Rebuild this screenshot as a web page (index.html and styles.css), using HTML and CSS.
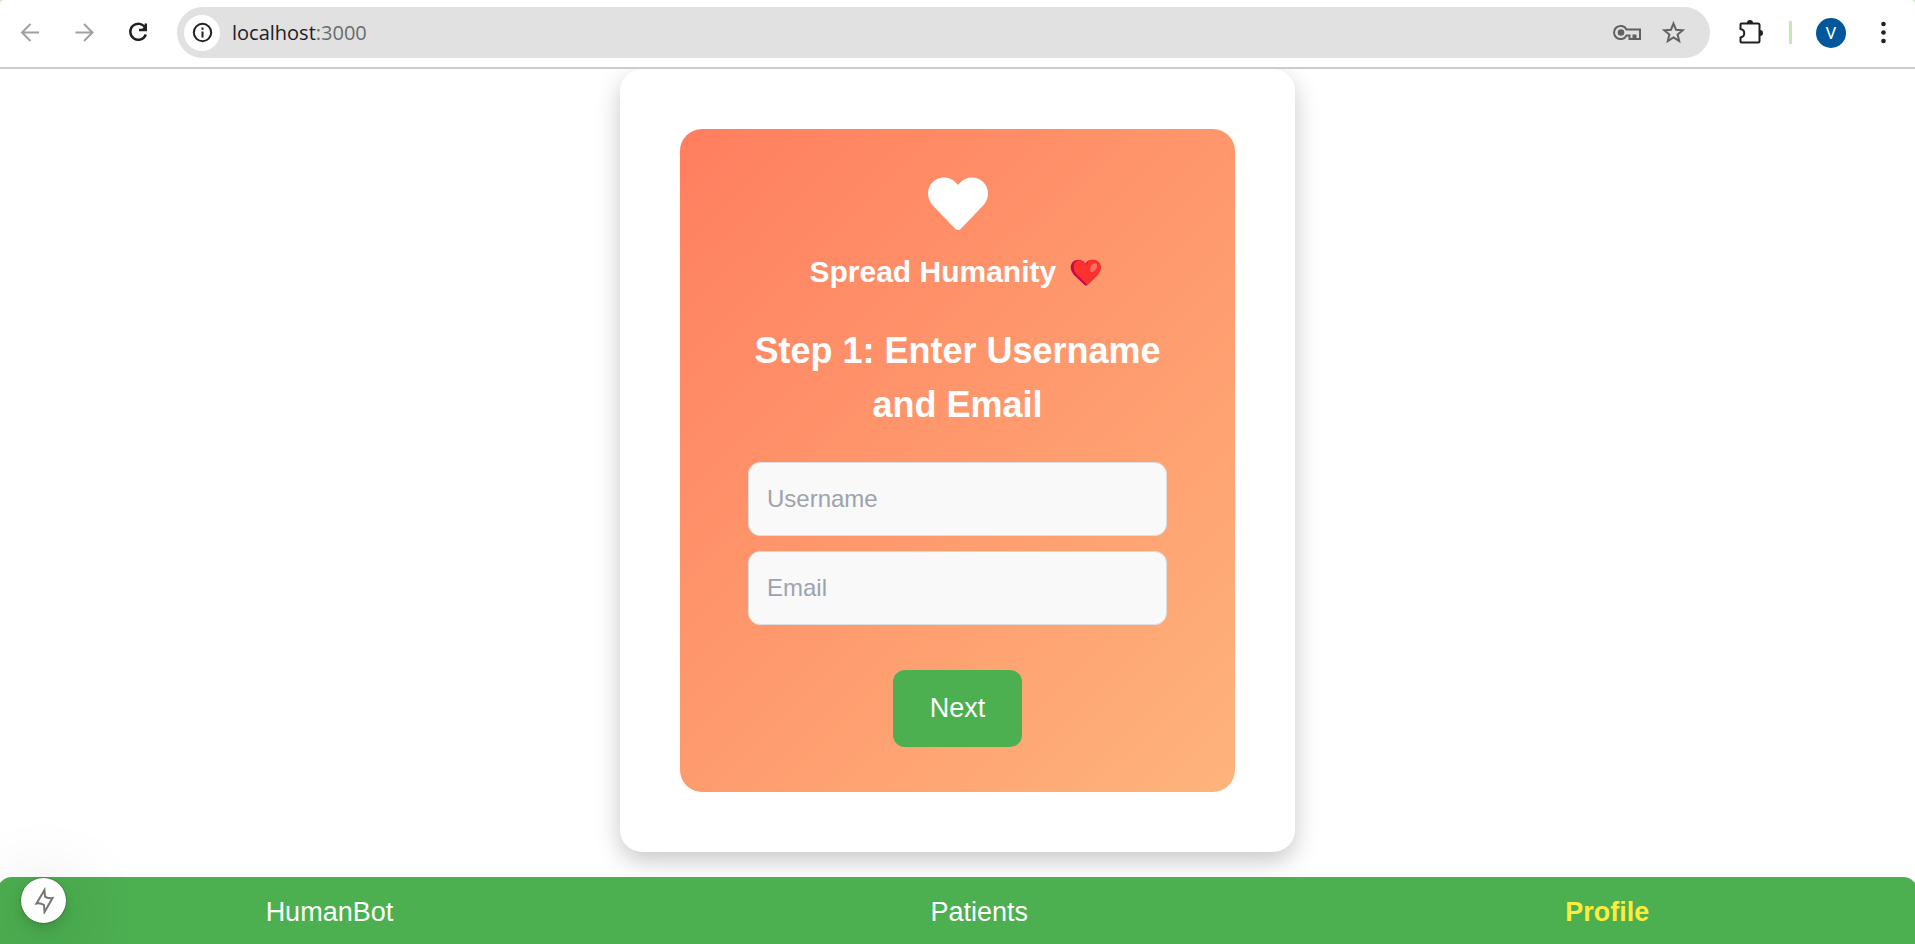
FILE: index.html
```html
<!DOCTYPE html>
<html lang="en">
<head>
<meta charset="utf-8">
<title>Profile</title>
<link rel="stylesheet" href="styles.css">
</head>
<body>
<div class="window">
  <div class="frame">
  <header class="toolbar">
    <div class="history">
      <button class="icon-button muted" aria-label="Back"><svg class="icon" viewBox="0 0 27 27"><path d="M22 13.500H5.500M13.500 5l-8.500 8.500 8.500 8.500"/></svg></button>
      <button class="icon-button muted" aria-label="Forward"><svg class="icon" viewBox="0 0 27 27"><path d="M4.500 13.500H21M13 5l8.500 8.500-8.500 8.500"/></svg></button>
      <button class="icon-button" aria-label="Reload"><svg class="icon bold" viewBox="0 0 27 27"><path d="M20.200 8.700A8 8 0 1 0 20.800 15.500"/><path d="M20.800 4.500V11H14"/><path d="M16.500 10.500H21V6z" fill="currentColor" stroke="none"/></svg></button>
    </div>
    <div class="address">
      <button class="site-info" aria-label="Site information"><svg class="icon" viewBox="0 0 27 27"><circle cx="13.500" cy="13.500" r="8.700"/><path d="M13.500 12.500v6M13.500 8.500v2.200"/></svg></button>
      <label class="url"><span class="host">localhost</span><span class="port">:3000</span></label>
      <button class="icon-button grey" aria-label="Passwords"><svg class="icon wide" viewBox="0 0 30 27"><path d="M14.500 10.500A6.600 6.600 0 1 0 14.500 16.500H17.500v3.500h4v-3.500h2v3.500H28v-9.500z"/><circle cx="9" cy="13.500" r="3.300" fill="currentColor" stroke="none"/></svg></button>
      <button class="icon-button grey" aria-label="Bookmark"><svg class="icon" viewBox="0 0 27 27"><path d="M13.500 4.500l2.500 6.200 6.700.5-5.100 4.300 1.600 6.500-5.700-3.500-5.700 3.500 1.600-6.500-5.100-4.300 6.700-.5z"/></svg></button>
    </div>
    <div class="actions">
      <button class="icon-button" aria-label="Extensions"><svg class="icon" viewBox="0 0 27 27"><path d="M2.500 5.500a1 1 0 0 1 1-1H20a1.500 1.500 0 0 1 1.500 1.500V22A1.500 1.500 0 0 1 20 23.500H3.500a1 1 0 0 1-1-1V18.500C7.500 17.500 7.500 11 2.500 10z"/><path d="M9 4a3 3 0 0 1 6 0zM22 11a3 3 0 0 1 0 6z" fill="currentColor" stroke="none"/></svg></button>
      <span class="divider"></span>
      <button class="avatar" aria-label="Account">V</button>
      <button class="icon-button" aria-label="Menu"><svg class="icon" viewBox="0 0 27 27"><g fill="currentColor" stroke="none"><circle cx="13.500" cy="5" r="2.300"/><circle cx="13.500" cy="13.500" r="2.300"/><circle cx="13.500" cy="22" r="2.300"/></g></svg></button>
    </div>
  </header>
  </div>

  <main class="content">
    <section class="card">
      <form class="panel">
        <svg class="heart" viewBox="0 0 60 60" aria-hidden="true"><path d="M30 11l-1.700-1.700A16 16 0 0 0 16 3.500C7 3.500 0 10.500 0 19.500c0 4.500 1.800 9 5.300 12.400L27.200 54.800a3.900 3.900 0 0 0 5.600 0L54.700 31.900C58.200 28.500 60 24 60 19.500 60 10.500 53 3.500 44 3.500a16 16 0 0 0-12.300 5.800z"/></svg>
        <p class="slogan">Spread Humanity
          <svg class="emoji" viewBox="0 0 41 30" role="img" aria-label="red heart"><path fill="#c7094d" d="M20.500 6C17.500.8 10.500.6 7.300 4.600 4.500 8.300 5.600 13 9 17l11 10.500h2L32.500 17c3.500-4 4.500-9 1.500-12.500C30.500.6 23.500.8 20.500 6z"/><path fill="#fb312e" d="M20.500 6C18 1.800 13 1.300 10.500 4c-3 3.500-1.800 9 1.500 12.800L22.500 27 32.500 17c3.500-4 4.500-9 1.500-12.500C30.500.6 23.500.8 20.500 6z"/><path fill="#d01347" d="M20.500 6c1-1.900 2.600-3.200 4.500-4-2 1.600-3 3.300-3.800 5.500z"/><ellipse cx="28.500" cy="9.500" rx="3" ry="5" fill="#ff6f61" transform="rotate(30 28.500 9.500)"/></svg>
        </p>
        <h1 class="title">Step 1: Enter Username and Email</h1>
        <div class="fields">
          <input class="field" type="text" placeholder="Username" aria-label="Username">
          <input class="field" type="email" placeholder="Email" aria-label="Email">
        </div>
        <button class="next" type="button">Next</button>
      </form>
    </section>
  </main>

  <nav class="tabs">
    <a class="tab" href="#humanbot">HumanBot</a>
    <a class="tab" href="#patients">Patients</a>
    <a class="tab active" href="#profile">Profile</a>
  </nav>
  <button class="dev-badge" aria-label="Static route"><svg class="bolt" viewBox="0 0 24 27"><path d="M12.500 3L4.500 16.500c2.500-.5 6 .5 7.500 1.500l.5 7L20.500 11c-3 .5-6 0-7.500-1.500z"/></svg></button>
</div>
</body>
</html>
```
FILE: styles.css
```css
* {
  box-sizing: border-box;
}

body {
  margin: 0;
  background: #fff;
  color: #fff;
  font-family: "Liberation Sans", Arial, sans-serif;
}

button,
input {
  font-family: inherit;
}

button {
  border: 0;
  padding: 0;
  background: none;
  color: inherit;
}

.window {
  position: relative;
  height: 100vh;
  overflow: hidden;
}

/* Browser toolbar */
.frame {
  position: relative;
  z-index: 1;
  background: #c5e8b7;
}

.toolbar {
  display: flex;
  align-items: center;
  height: 69px;
  padding: 0 18px 2px 17px;
  border-bottom: 2px solid #ccc;
  border-radius: 4px 4px 0 0;
  background: #fff;
  color: #1f2023;
}

.history {
  display: flex;
  gap: 27px;
  margin-right: 25px;
}

.icon-button {
  display: flex;
}

.muted {
  color: #a0a0a0;
}

.grey {
  color: #5f6164;
}

.icon {
  width: 27px;
  height: 27px;
  fill: none;
  stroke: currentColor;
  stroke-width: 2;
}

.icon.wide {
  width: 30px;
}

.icon.bold {
  stroke-width: 2.4;
}

.address {
  display: flex;
  flex: 1;
  align-items: center;
  gap: 18px;
  height: 51px;
  padding: 0 23px 0 7px;
  border-radius: 26px;
  background: #e1e1e1;
}

.site-info {
  display: flex;
  align-items: center;
  justify-content: center;
  width: 36px;
  height: 36px;
  border-radius: 50%;
  background: #fff;
}

.url {
  flex: 1;
  margin-left: -6px;
  font-family: "Open Sans", "Noto Sans", sans-serif;
  font-size: 20px;
  line-height: 28px;
}

.port {
  color: #6b6b6b;
}

.actions {
  display: flex;
  align-items: center;
  gap: 24px;
  margin-left: 28px;
}

.divider {
  width: 3px;
  height: 23px;
  background: #c5e8b7;
}

.avatar {
  width: 30px;
  height: 30px;
  border-radius: 50%;
  background: #01579b;
  color: #fff;
  font-family: Roboto, sans-serif;
  font-size: 17px;
}

/* Sign-up card */
.content {
  display: flex;
  justify-content: center;
}

.card {
  width: 100%;
  max-width: 675px;
  padding: 60px;
  border-radius: 22px;
  background: #fff;
  box-shadow: 0 9px 24px rgba(0, 0, 0, 0.22);
}

.panel {
  display: flex;
  flex-direction: column;
  align-items: center;
  padding: 45px 68px;
  border-radius: 22px;
  background: linear-gradient(135deg, #ff7e5f, #feb47b);
  text-align: center;
}

.heart {
  width: 60px;
  height: 60px;
  fill: #fff;
}

.slogan {
  margin: 15px 0 0;
  font-size: 30px;
  font-weight: 700;
  line-height: 45px;
}

.emoji {
  width: 41px;
  height: 30px;
  vertical-align: -6px;
}

.title {
  margin: 30px 0;
  font-size: 36px;
  font-weight: 700;
  line-height: 54px;
}

.fields {
  display: grid;
  gap: 15px;
  width: 100%;
  margin-bottom: 45px;
}

.field {
  width: 100%;
  height: 74px;
  padding: 0 18px;
  border: 1px solid #ddd;
  border-radius: 12px;
  background: #f9f9f9;
  color: #333;
  font-size: 24px;
}

.field::placeholder {
  color: #9ca3af;
}

.next {
  padding: 18px 37px;
  border-radius: 12px;
  background: #4caf50;
  color: #fff;
  font-size: 27px;
  line-height: 41px;
}

/* Bottom navigation */
.tabs {
  position: relative;
  display: flex;
  justify-content: space-around;
  margin: 25px -3px 0;
  padding: 15px 0;
  border-radius: 15px 15px 0 0;
  background: #4caf50;
}

.tab {
  color: #fff;
  font-size: 27px;
  line-height: 40px;
  text-decoration: none;
}

.tab.active {
  color: #ffeb3b;
  font-weight: 700;
}

.dev-badge {
  position: absolute;
  bottom: 21px;
  left: 21px;
  display: flex;
  align-items: center;
  justify-content: center;
  width: 45px;
  height: 45px;
  border-radius: 50%;
  background: #fff;
  box-shadow: 0 0 0 1px rgba(0, 0, 0, 0.15), 0 6px 12px rgba(0, 0, 0, 0.12), 0 12px 72px rgba(0, 0, 0, 0.25);
}

.bolt {
  width: 24px;
  height: 27px;
  fill: none;
  stroke: #757575;
  stroke-width: 2;
}
```
